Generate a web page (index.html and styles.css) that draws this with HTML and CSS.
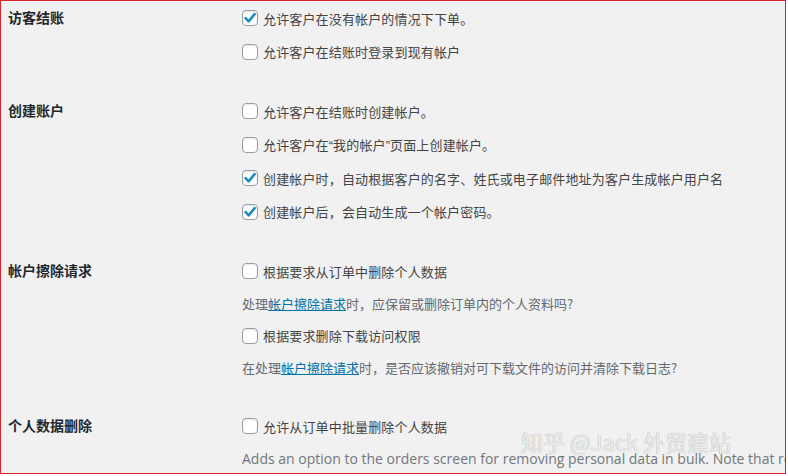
FILE: index.html
```html
<!DOCTYPE html>
<html lang="zh-CN">
<head>
  <meta charset="UTF-8" />
  <meta name="viewport" content="width=device-width, initial-scale=1.0"/>
  <title>账户和隐私</title>
  <link rel="stylesheet" href="styles.css">
</head>
<body>
  <div class="frame">
    <!-- 访客结账 -->
    <div class="setting">
      <div class="setting-label">访客结账</div>
      <div class="setting-fields">
        <label class="option">
          <span class="box checked"><svg viewBox="0 0 16 16"><path d="M3.6 8.2 L6.7 11.3 L12.6 4.2" /></svg></span>
          允许客户在没有帐户的情况下下单。
        </label>
        <label class="option">
          <span class="box"></span>
          允许客户在结账时登录到现有帐户
        </label>
      </div>
    </div>

    <!-- 创建账户 -->
    <div class="setting">
      <div class="setting-label">创建账户</div>
      <div class="setting-fields">
        <label class="option">
          <span class="box"></span>
          允许客户在结账时创建帐户。
        </label>
        <label class="option">
          <span class="box"></span>
          <span>允许客户在<span class="quote">“</span>我的帐户<span class="quote">”</span>页面上创建帐户。</span>
        </label>
        <label class="option">
          <span class="box checked"><svg viewBox="0 0 16 16"><path d="M3.6 8.2 L6.7 11.3 L12.6 4.2" /></svg></span>
          创建帐户时，自动根据客户的名字、姓氏或电子邮件地址为客户生成帐户用户名
        </label>
        <label class="option">
          <span class="box checked"><svg viewBox="0 0 16 16"><path d="M3.6 8.2 L6.7 11.3 L12.6 4.2" /></svg></span>
          创建帐户后，会自动生成一个帐户密码。
        </label>
      </div>
    </div>

    <!-- 帐户擦除请求 -->
    <div class="setting">
      <div class="setting-label">帐户擦除请求</div>
      <div class="setting-fields">
        <label class="option">
          <span class="box"></span>
          根据要求从订单中删除个人数据
        </label>
        <p class="description">处理<a href="#">帐户擦除请求</a>时，应保留或删除订单内的个人资料吗?</p>
        <label class="option">
          <span class="box"></span>
          根据要求删除下载访问权限
        </label>
        <p class="description">在处理<a href="#">帐户擦除请求</a>时，是否应该撤销对可下载文件的访问并清除下载日志?</p>
      </div>
    </div>

    <!-- 个人数据删除 -->
    <div class="setting">
      <div class="setting-label">个人数据删除</div>
      <div class="setting-fields">
        <label class="option">
          <span class="box"></span>
          允许从订单中批量删除个人数据
        </label>
        <p class="description latin">Adds an option to the orders screen for removing personal data in bulk. Note that removing personal data cannot be undone.</p>
      </div>
    </div>

    <div class="watermark">知乎 @Jack 外贸建站</div>
  </div>
</body>
</html>
```

FILE: styles.css
```css
body {
  margin: 0;
  padding: 0;
  background: #fff;
  font-family: "Noto Sans CJK SC", "Noto Sans", sans-serif;
}

.frame {
  position: relative;
  width: 786px;
  height: 474px;
  box-sizing: border-box;
  border: 1px solid #d7232e;
  background: #f1f1f1;
  overflow: hidden;
  padding-top: 0.25px;
}

.setting {
  display: flex;
  margin-bottom: 26px;
}

.setting-label {
  width: 234px;
  flex: none;
  padding-left: 7px;
  font-size: 14px;
  font-weight: bold;
  color: #23282d;
  line-height: 33.5px;
}

.setting-fields {
  flex: 1;
  display: flex;
  flex-direction: column;
  white-space: nowrap;
}

.option {
  display: flex;
  align-items: center;
  gap: 5px;
  height: 33.5px;
  font-size: 13px;
  letter-spacing: 0.15px;
  color: #444;
  cursor: pointer;
}

.quote {
  font-family: "Liberation Sans", sans-serif;
  letter-spacing: 0;
}

.box {
  width: 16px;
  height: 16px;
  box-sizing: border-box;
  border: 1px solid #999ca1;
  border-radius: 4px;
  background: #fff;
  box-shadow: inset 0 1px 2px rgba(0, 0, 0, 0.1);
  flex: none;
}

.box svg {
  display: block;
  width: 16px;
  height: 16px;
  margin: -1px;
}

.box svg path {
  fill: none;
  stroke: #1e8cbe;
  stroke-width: 2.6;
  stroke-linecap: round;
  stroke-linejoin: round;
}

.description {
  margin: 0;
  height: 31px;
  line-height: 31px;
  font-size: 13px;
  color: #646970;
}

.description a {
  color: #0073aa;
  text-decoration: underline;
}

.description.latin {
  font-family: "Open Sans", sans-serif;
  font-size: 14px;
  height: 32px;
  line-height: 32px;
  color: #72777c;
}

.watermark {
  position: absolute;
  left: 520px;
  top: 427px;
  font-size: 22px;
  line-height: 26px;
  color: rgba(255, 255, 255, 0.85);
  text-shadow: 0 0 1px rgba(0, 0, 0, 0.45);
  white-space: nowrap;
}
```
